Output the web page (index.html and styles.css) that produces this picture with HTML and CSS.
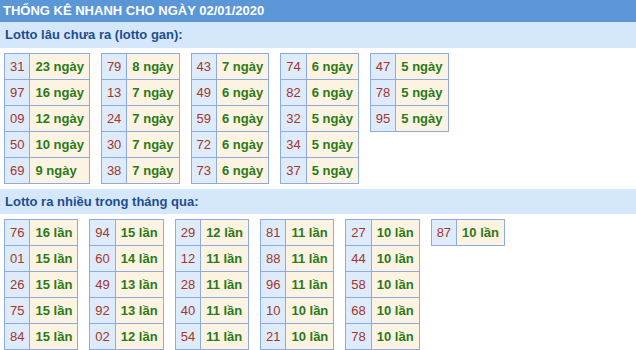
FILE: index.html
```html
<!DOCTYPE html>
<html lang="vi">
<head>
<meta charset="utf-8">
<title>Thống kê nhanh</title>
<link rel="stylesheet" href="styles.css">
</head>
<body>
<div class="page">
  <div class="title">THỐNG KÊ NHANH CHO NGÀY 02/01/2020</div>
  <div class="band">Lotto lâu chưa ra (lotto gan):</div>
  <div class="tables">
    <table class="stat"><tbody>
      <tr><td class="num">31</td><td class="val">23 ngày</td></tr>
      <tr><td class="num">97</td><td class="val">16 ngày</td></tr>
      <tr><td class="num">09</td><td class="val">12 ngày</td></tr>
      <tr><td class="num">50</td><td class="val">10 ngày</td></tr>
      <tr><td class="num">69</td><td class="val">9 ngày</td></tr>
    </tbody></table>
    <table class="stat"><tbody>
      <tr><td class="num">79</td><td class="val">8 ngày</td></tr>
      <tr><td class="num">13</td><td class="val">7 ngày</td></tr>
      <tr><td class="num">24</td><td class="val">7 ngày</td></tr>
      <tr><td class="num">30</td><td class="val">7 ngày</td></tr>
      <tr><td class="num">38</td><td class="val">7 ngày</td></tr>
    </tbody></table>
    <table class="stat"><tbody>
      <tr><td class="num">43</td><td class="val">7 ngày</td></tr>
      <tr><td class="num">49</td><td class="val">6 ngày</td></tr>
      <tr><td class="num">59</td><td class="val">6 ngày</td></tr>
      <tr><td class="num">72</td><td class="val">6 ngày</td></tr>
      <tr><td class="num">73</td><td class="val">6 ngày</td></tr>
    </tbody></table>
    <table class="stat"><tbody>
      <tr><td class="num">74</td><td class="val">6 ngày</td></tr>
      <tr><td class="num">82</td><td class="val">6 ngày</td></tr>
      <tr><td class="num">32</td><td class="val">5 ngày</td></tr>
      <tr><td class="num">34</td><td class="val">5 ngày</td></tr>
      <tr><td class="num">37</td><td class="val">5 ngày</td></tr>
    </tbody></table>
    <table class="stat"><tbody>
      <tr><td class="num">47</td><td class="val">5 ngày</td></tr>
      <tr><td class="num">78</td><td class="val">5 ngày</td></tr>
      <tr><td class="num">95</td><td class="val">5 ngày</td></tr>
    </tbody></table>
  </div>
  <div class="band band2">Lotto ra nhiều trong tháng qua:</div>
  <div class="tables">
    <table class="stat"><tbody>
      <tr><td class="num">76</td><td class="val">16 lần</td></tr>
      <tr><td class="num">01</td><td class="val">15 lần</td></tr>
      <tr><td class="num">26</td><td class="val">15 lần</td></tr>
      <tr><td class="num">75</td><td class="val">15 lần</td></tr>
      <tr><td class="num">84</td><td class="val">15 lần</td></tr>
    </tbody></table>
    <table class="stat"><tbody>
      <tr><td class="num">94</td><td class="val">15 lần</td></tr>
      <tr><td class="num">60</td><td class="val">14 lần</td></tr>
      <tr><td class="num">49</td><td class="val">13 lần</td></tr>
      <tr><td class="num">92</td><td class="val">13 lần</td></tr>
      <tr><td class="num">02</td><td class="val">12 lần</td></tr>
    </tbody></table>
    <table class="stat"><tbody>
      <tr><td class="num">29</td><td class="val">12 lần</td></tr>
      <tr><td class="num">12</td><td class="val">11 lần</td></tr>
      <tr><td class="num">28</td><td class="val">11 lần</td></tr>
      <tr><td class="num">40</td><td class="val">11 lần</td></tr>
      <tr><td class="num">54</td><td class="val">11 lần</td></tr>
    </tbody></table>
    <table class="stat"><tbody>
      <tr><td class="num">81</td><td class="val">11 lần</td></tr>
      <tr><td class="num">88</td><td class="val">11 lần</td></tr>
      <tr><td class="num">96</td><td class="val">11 lần</td></tr>
      <tr><td class="num">10</td><td class="val">10 lần</td></tr>
      <tr><td class="num">21</td><td class="val">10 lần</td></tr>
    </tbody></table>
    <table class="stat"><tbody>
      <tr><td class="num">27</td><td class="val">10 lần</td></tr>
      <tr><td class="num">44</td><td class="val">10 lần</td></tr>
      <tr><td class="num">58</td><td class="val">10 lần</td></tr>
      <tr><td class="num">68</td><td class="val">10 lần</td></tr>
      <tr><td class="num">78</td><td class="val">10 lần</td></tr>
    </tbody></table>
    <table class="stat"><tbody>
      <tr><td class="num">87</td><td class="val">10 lần</td></tr>
    </tbody></table>
  </div>
</div>
</body>
</html>
```
FILE: styles.css
```css
html, body {
  margin: 0;
  padding: 0;
  background: #ffffff;
}
.page {
  width: 636px;
  font-family: "Liberation Sans", Arial, sans-serif;
}
.title {
  height: 22px;
  line-height: 22px;
  background: #5b96d6;
  color: #ffffff;
  font-weight: bold;
  font-size: 13px;
  padding-left: 3px;
}
.band {
  height: 26px;
  line-height: 26px;
  background: #d5e8fb;
  color: #1f4d8f;
  font-weight: bold;
  font-size: 13px;
  padding-left: 5px;
}
.band2 {
  height: 25px;
  line-height: 25px;
}
.tables {
  display: flex;
  align-items: flex-start;
  gap: 11px;
  padding: 5px 0 5px 4px;
}
.stat {
  border-collapse: collapse;
  font-size: 13px;
}
.stat td {
  border: 1px solid #8eaae2;
  padding: 5px 5px;
  line-height: 15px;
  white-space: nowrap;
}
.num {
  background: #deebfb;
  color: #a3352c;
}
.val {
  background: #fdf3e2;
  color: #2a7a18;
  font-weight: bold;
}
```
